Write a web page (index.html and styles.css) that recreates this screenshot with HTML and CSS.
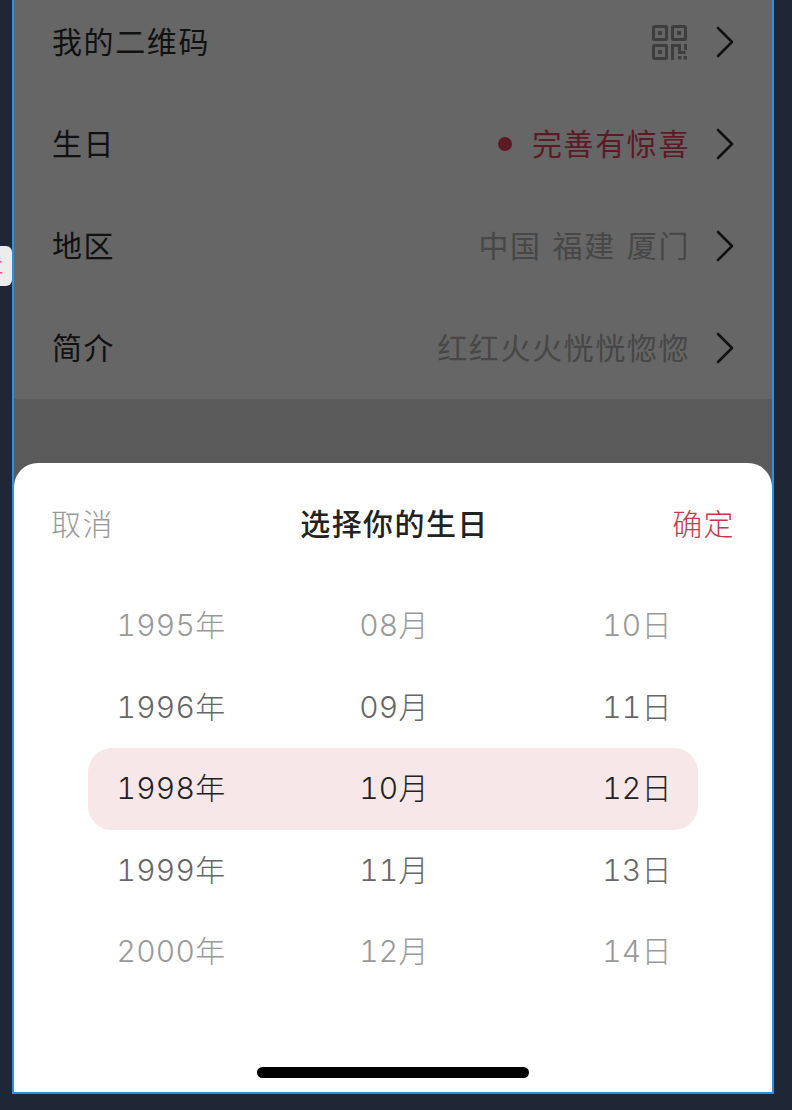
FILE: index.html
```html
<!DOCTYPE html>
<html lang="zh">
<head>
<meta charset="utf-8">
<title>选择你的生日</title>
<link rel="stylesheet" href="styles.css">
</head>
<body>
<div class="tab"><span class="tab-text">工</span></div>
<div class="phone">
  <div class="list">
    <div class="row">
      <span class="label">我的二维码</span>
      <span class="value">
        <svg class="qr" viewBox="0 0 35 35" width="35" height="35" fill="none" stroke="currentColor" stroke-width="3">
          <rect x="1.5" y="1.5" width="13" height="13" rx="1"/>
          <rect x="20.5" y="1.5" width="13" height="13" rx="1"/>
          <rect x="1.5" y="20.5" width="13" height="13" rx="1"/>
          <path d="M20.5 35V20.5h7v7h6M33.5 19v6"/>
          <g fill="currentColor" stroke="none">
            <rect x="6" y="6" width="4" height="4"/>
            <rect x="25" y="6" width="4" height="4"/>
            <rect x="6" y="25" width="4" height="4"/>
            <rect x="26" y="31" width="3.5" height="3.5"/>
            <rect x="31.5" y="31" width="3.5" height="3.5"/>
          </g>
        </svg>
      </span>
      <svg class="chev" viewBox="0 0 18 32" width="18" height="32"><path d="M2 2l14 14L2 30"/></svg>
    </div>
    <div class="row">
      <span class="label">生日</span>
      <span class="value red"><i class="dot"></i><span class="red-text">完善有惊喜</span></span>
      <svg class="chev" viewBox="0 0 18 32" width="18" height="32"><path d="M2 2l14 14L2 30"/></svg>
    </div>
    <div class="row">
      <span class="label">地区</span>
      <span class="value region"><span>中国</span><span>福建</span><span>厦门</span></span>
      <svg class="chev" viewBox="0 0 18 32" width="18" height="32"><path d="M2 2l14 14L2 30"/></svg>
    </div>
    <div class="row">
      <span class="label">简介</span>
      <span class="value">红红火火恍恍惚惚</span>
      <svg class="chev" viewBox="0 0 18 32" width="18" height="32"><path d="M2 2l14 14L2 30"/></svg>
    </div>
  </div>
  <div class="rest"></div>
  <div class="sheet">
    <div class="head">
      <span class="cancel">取消</span>
      <span class="title">选择你的生日</span>
      <span class="ok">确定</span>
    </div>
    <div class="picker">
      <div class="p-row far"><span class="c1">1995年</span><span class="c2">08月</span><span class="c3">10日</span></div>
      <div class="p-row near"><span class="c1">1996年</span><span class="c2">09月</span><span class="c3">11日</span></div>
      <div class="p-row sel"><span class="c1">1998年</span><span class="c2">10月</span><span class="c3">12日</span></div>
      <div class="p-row near"><span class="c1">1999年</span><span class="c2">11月</span><span class="c3">13日</span></div>
      <div class="p-row far"><span class="c1">2000年</span><span class="c2">12月</span><span class="c3">14日</span></div>
    </div>
    <div class="home"></div>
  </div>
</div>
</body>
</html>
```
FILE: styles.css
```css
* { box-sizing: border-box; }
html, body { height: 100%; }
body {
  margin: 0;
  height: 1110px;
  overflow: hidden;
  background: #1f2736;
  font-family: "Noto Sans CJK SC", "Liberation Sans", sans-serif;
  padding: 0 18px 16px 12px;
  position: relative;
}
.phone {
  position: relative;
  height: 1094px;
  border: 2px solid #1e96f0;
  border-top: 0;
  overflow: hidden;
  background: #5a5a5a;
  display: flex;
  flex-direction: column;
}
.list {
  margin-top: -9px;
  background: #666666;
  display: flex;
  flex-direction: column;
  flex: none;
}
.row {
  height: 102px;
  display: flex;
  align-items: center;
  padding: 0 38px 0 38px;
}
.label {
  font-size: 30px;
  letter-spacing: 1.6px;
  color: #111;
  flex: 1;
  padding-bottom: 4px;
}
.value {
  display: flex;
  align-items: center;
  font-size: 30px;
  letter-spacing: 1.6px;
  color: #474747;
  padding-bottom: 4px;
}
.region { gap: 11px; }
.red { color: #5c1a25; }
.red-text { margin-left: 20px; }
.dot {
  width: 14px;
  height: 14px;
  border-radius: 50%;
  background: currentColor;
  margin-top: 4px;
}
.qr { color: #3e3e3e; margin: 4px 3px 0 0; }
.chev {
  margin-left: 26px;
  fill: none;
  stroke: #111;
  stroke-width: 2.6;
  stroke-linecap: round;
  stroke-linejoin: round;
  flex: none;
}
.rest { flex: 1; }
.sheet {
  position: absolute;
  left: 0;
  right: 0;
  bottom: 0;
  height: 629px;
  background: #fff;
  border-radius: 24px 24px 0 0;
  display: flex;
  flex-direction: column;
}
.head {
  display: flex;
  justify-content: space-between;
  align-items: center;
  padding: 34px 37px 0 37px;
  height: 84px;
  font-size: 30px;
  font-weight: 300;
  letter-spacing: 1.4px;
}
.cancel { color: #999; }
.ok { color: #c8374a; }
.title { color: #222; font-weight: 500; margin-left: 3px; }
.picker {
  margin: 38px 74px 0;
  display: flex;
  flex-direction: column;
}
.p-row {
  height: 81.5px;
  display: flex;
  align-items: center;
  padding-bottom: 5px;
  font-family: "Inter", "Noto Sans CJK SC", sans-serif;
  font-weight: 300;
  font-size: 30px;
  font-variant-numeric: tabular-nums;
  letter-spacing: 0.3px;
  border-radius: 24px;
}
.c1, .c2, .c3 { text-align: center; flex: none; }
.c1 { width: 166px; }
.c2 { width: 280px; }
.c3 { width: 122px; margin-left: auto; }
.far { color: #999; }
.near { color: #666; }
.sel { color: #222; background: #f7e7e9; }
.home {
  position: absolute;
  left: 243px;
  bottom: 14px;
  width: 272px;
  height: 11px;
  border-radius: 6px;
  background: #000;
}
.tab {
  position: absolute;
  left: 0;
  top: 246px;
  width: 12px;
  height: 40px;
  background: #ececec;
  border-radius: 0 6px 6px 0;
  overflow: hidden;
  display: flex;
  align-items: center;
  justify-content: flex-end;
}
.tab-text {
  font-size: 16px;
  font-weight: 500;
  color: #f5517f;
  flex: none;
  margin-right: 9px;
}
```
